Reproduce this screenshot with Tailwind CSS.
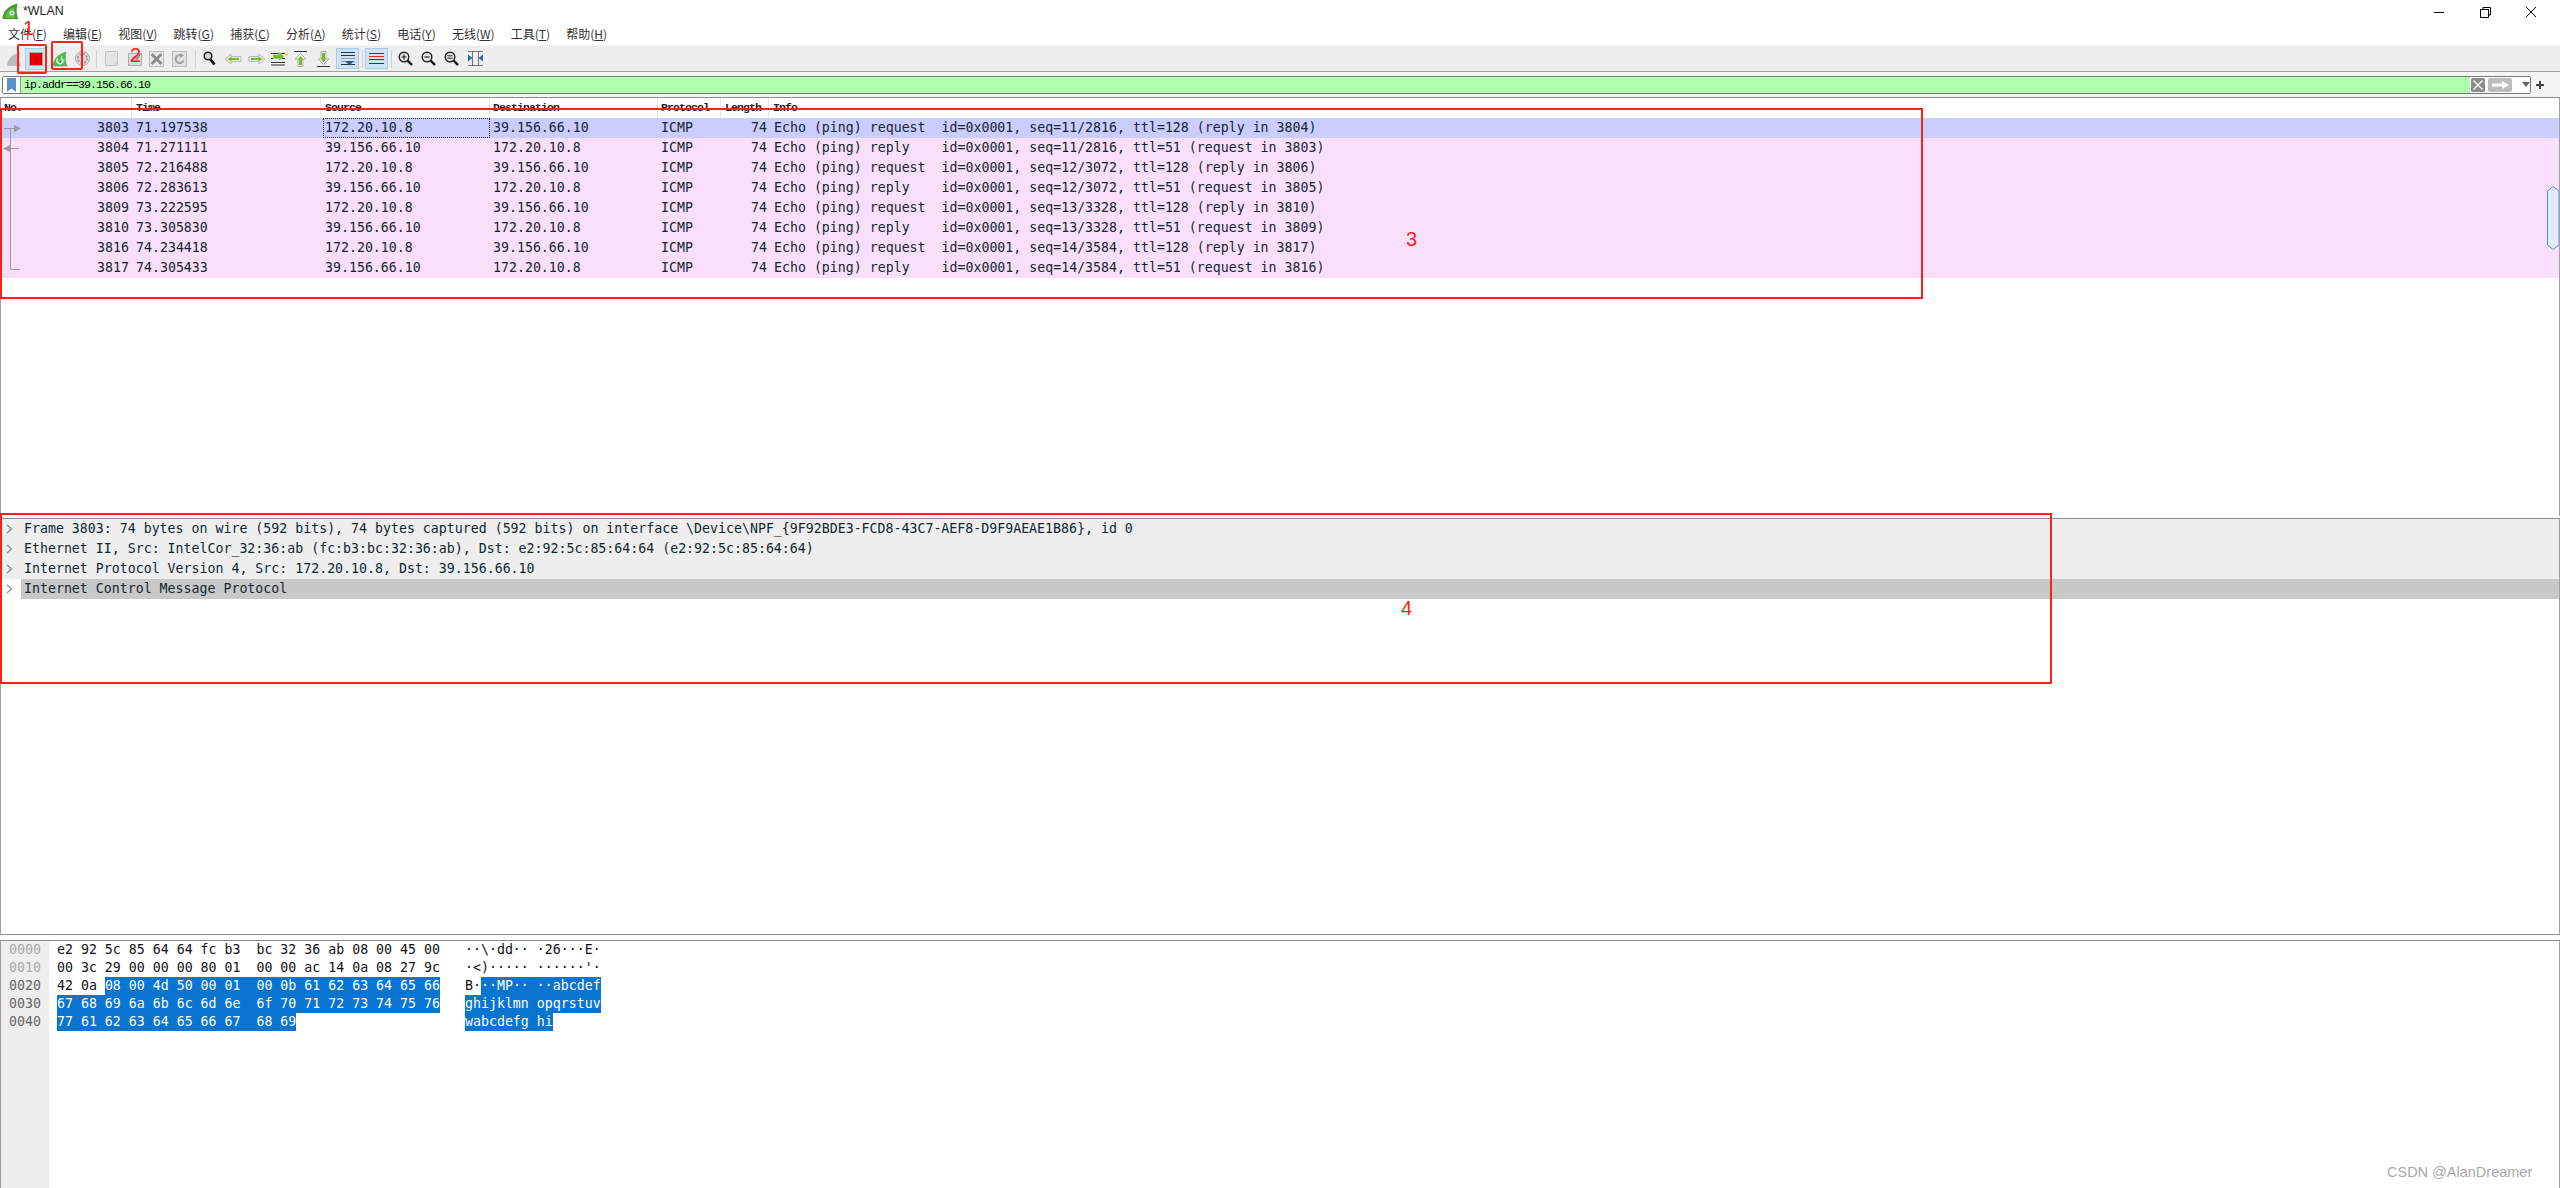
<!DOCTYPE html>
<html>
<head>
<meta charset="utf-8">
<title>*WLAN</title>
<script src="https://cdn.jsdelivr.net/npm/@tailwindcss/browser@4"></script>
</head>
<body class="bg-white">
<div class="relative w-[2560px] h-[1188px] overflow-hidden bg-white flex flex-col font-['DejaVu_Sans_Mono',monospace] text-[13.25px] text-[#12272e]">

  <!-- title bar -->
  <div class="h-[23px] flex items-center shrink-0 bg-white font-['Liberation_Sans',sans-serif]">
    <svg class="ml-[2px] w-[17px] h-[17px]" viewBox="0 0 17 17"><path d="M0.500 16C0.500 9 6 2.500 15.500 0.500C14 6 14.500 12 16.500 16Z" fill="#3f9e2b"/><path d="M3 15C4 9 8 5.500 12.500 4C11.500 8 12 12 13.500 15Z" fill="#69b84a"/><circle cx="10" cy="10" r="2.600" fill="#d8ecd0"/><circle cx="10" cy="10" r="1" fill="#69b84a"/></svg>
    <span class="ml-[4px] text-[12.4px] text-[#222]">*WLAN</span>
    <div class="ml-auto flex items-center h-full">
      <svg class="w-[46px] h-[20px]" viewBox="0 0 46 20"><path d="M18 10.5H28" stroke="#000" fill="none"/></svg>
      <svg class="w-[46px] h-[20px]" viewBox="0 0 46 20"><path d="M18.5 7.5H26.5V15.5H18.5ZM21 7.5V5.5H28.5V13H26.5" stroke="#000" fill="none"/></svg>
      <svg class="w-[46px] h-[20px] mr-[6px]" viewBox="0 0 46 20"><path d="M18 5L28 15M28 5L18 15" stroke="#000" fill="none"/></svg>
    </div>
  </div>

  <!-- menu bar -->
  <div class="h-[22px] flex items-center shrink-0 bg-white pl-[8px] gap-[16.2px] text-[12px] text-[#333] font-['Noto_Sans_CJK_SC','Noto_Sans',sans-serif] whitespace-pre">
    <span>文件(<u>F</u>)</span><span>编辑(<u>E</u>)</span><span>视图(<u>V</u>)</span><span>跳转(<u>G</u>)</span><span>捕获(<u>C</u>)</span><span>分析(<u>A</u>)</span><span>统计(<u>S</u>)</span><span>电话(<u>Y</u>)</span><span>无线(<u>W</u>)</span><span>工具(<u>T</u>)</span><span>帮助(<u>H</u>)</span>
  </div>

  <!-- main toolbar -->
  <div class="h-[27px] shrink-0 flex items-center bg-[#eeeeee] border-t border-[#f6f6f6] border-b border-b-[#a0a0a0] pl-[2px]">
    <!-- start -->
    <div class="w-[23px] h-[22px] flex items-center justify-center">
      <svg class="w-[16px] h-[16px]" viewBox="0 0 16 16"><path d="M1 15C1 9 6 3 14 1C13 6 13 11 15 15Z" fill="#bdbdbd"/></svg>
    </div>
    <!-- stop -->
    <div class="w-[21px] h-[22px] flex items-center justify-center bg-[#cfe3f5] border border-[#a5cdee]">
      <div class="w-[14px] h-[14px] bg-[#e00000] border border-[#aaa]"></div>
    </div>
    <!-- restart -->
    <div class="ml-[2px] w-[23px] h-[22px] flex items-center justify-center">
      <svg class="w-[16px] h-[16px]" viewBox="0 0 16 16"><path d="M1 15C1 9 6 3 14 1C13 6 13 11 15 15Z" fill="#3cc43c" stroke="#888" stroke-width=".6"/><path d="M6 7.5A3 3 0 1 0 11 10" fill="none" stroke="#fff" stroke-width="1.6"/><path d="M9.5 5.5V9H12.5" fill="none" stroke="#fff" stroke-width="1.2"/></svg>
    </div>
    <!-- options -->
    <div class="w-[23px] h-[22px] flex items-center justify-center">
      <svg class="w-[17px] h-[17px]" viewBox="0 0 17 17"><circle cx="8.5" cy="8.5" r="7" fill="#ddd" stroke="#aaa"/><circle cx="8.5" cy="8.5" r="4.5" fill="none" stroke="#999" stroke-width="2" stroke-dasharray="2 1.5"/><circle cx="8.5" cy="8.5" r="1.5" fill="#eee" stroke="#999" stroke-width=".6"/></svg>
    </div>
    <div class="ml-[2px] w-px h-[18px] bg-[#d0d0d0]"></div>
    <!-- open -->
    <div class="ml-[3px] w-[23px] h-[22px] flex items-center justify-center">
      <svg class="w-[15px] h-[17px]" viewBox="0 0 15 17"><path d="M1.500 1.500H13.500V15.500H1.500Z" fill="#e4e4e4" stroke="#c4c4c4"/><path d="M10 15.500L13.500 12" stroke="#c4c4c4" fill="none"/></svg>
    </div>
    <!-- save -->
    <div class="ml-px w-[21px] h-[22px] flex items-center justify-center">
      <svg class="w-[16px] h-[17px]" viewBox="0 0 16 17"><path d="M1.500 3.500H14.500V15.500H1.500Z" fill="#ddd" stroke="#aaa"/><path d="M4 11L8 7L10 9L13 4" stroke="#8d8d8d" stroke-width="2" fill="none"/></svg>
    </div>
    <!-- close -->
    <div class="w-[23px] h-[22px] flex items-center justify-center">
      <svg class="w-[15px] h-[16px]" viewBox="0 0 15 16"><rect x=".5" y=".5" width="14" height="15" fill="#e8e8e8" stroke="#bbb"/><path d="M2.500 3L12.500 13M12.500 3L2.500 13" stroke="#8e8e8e" stroke-width="3"/></svg>
    </div>
    <!-- reload -->
    <div class="w-[23px] h-[22px] flex items-center justify-center">
      <svg class="w-[15px] h-[16px]" viewBox="0 0 15 16"><rect x=".5" y=".5" width="14" height="15" fill="#e2e2e2" stroke="#bbb"/><path d="M11.500 9.500A4 4 0 1 1 9.500 4.500" stroke="#a0a0a0" stroke-width="2" fill="none"/><path d="M8 2L12 4.500L8 7Z" fill="#a0a0a0"/></svg>
    </div>
    <div class="ml-[4px] w-px h-[18px] bg-[#d0d0d0]"></div>
    <!-- find -->
    <div class="ml-[2px] w-[23px] h-[22px] flex items-center justify-center">
      <svg class="w-[13px] h-[15px]" viewBox="0 0 13 15"><circle cx="5" cy="5" r="3.800" fill="#cfd6dc" stroke="#222" stroke-width="1.600"/><path d="M7.500 8.500L11.500 13.500" stroke="#111" stroke-width="2.800"/></svg>
    </div>
    <!-- back -->
    <div class="w-[24px] h-[22px] flex items-center justify-center">
      <svg class="w-[18px] h-[12px]" viewBox="0 0 18 12"><path d="M1 6L7 1V3.500H17V8.500H7V11Z" fill="#ececd8" stroke="#b8b8b8"/><path d="M3.500 6L7.500 3.500V5H15V7H7.500V8.500Z" fill="#76bb2b"/></svg>
    </div>
    <!-- forward -->
    <div class="w-[23px] h-[22px] flex items-center justify-center">
      <svg class="w-[18px] h-[12px]" viewBox="0 0 18 12"><path d="M17 6L11 1V3.500H1V8.500H11V11Z" fill="#ececd8" stroke="#b8b8b8"/><path d="M14.500 6L10.500 3.500V5H3V7H10.500V8.500Z" fill="#76bb2b"/></svg>
    </div>
    <!-- goto -->
    <div class="w-[21px] h-[22px] flex items-center justify-center">
      <svg class="w-[18px] h-[15px]" viewBox="0 0 18 15"><path d="M1 2.500H15M1 7.500H15M1 11.500H15M1 14H15" stroke="#333"/><path d="M3 3.500H9V1L14 5.500L9 10V7.500H3Z" fill="#76bb2b" stroke="#ddd" stroke-width=".6"/><rect x="15" y="2" width="3" height="3" fill="#f2dc54"/></svg>
    </div>
    <!-- first -->
    <div class="w-[23px] h-[22px] flex items-center justify-center">
      <svg class="w-[15px] h-[16px]" viewBox="0 0 15 16"><path d="M1 .5H14" stroke="#333"/><path d="M7.500 2.500L13 8H10V15.500H5V8H2Z" fill="#f0f0e0" stroke="#b0b0b0"/><path d="M7.500 5L10.500 8.500H9V14H6V8.500H4.500Z" fill="#76bb2b"/></svg>
    </div>
    <!-- last -->
    <div class="w-[23px] h-[22px] flex items-center justify-center">
      <svg class="w-[15px] h-[16px]" viewBox="0 0 15 16"><path d="M1 15.500H14" stroke="#333"/><path d="M7.500 13.500L13 8H10V.5H5V8H2Z" fill="#f0f0e0" stroke="#b0b0b0"/><path d="M7.500 11L10.500 7.500H9V2H6V7.500H4.500Z" fill="#76bb2b"/></svg>
    </div>
    <!-- autoscroll -->
    <div class="ml-[1px] w-[23px] h-[21px] flex items-center justify-center bg-[#cfe3f5] border border-[#a5cdee]">
      <svg class="w-[16px] h-[15px]" viewBox="0 0 16 15"><path d="M1 1.500H15M1 4.500H15" stroke="#333"/><path d="M1 7.500H15M1 10.500H15" stroke="#999"/><path d="M1 13.500H15" stroke="#333"/><path d="M5 10H14L9.500 14.500Z" fill="#1d5d94"/></svg>
    </div>
    <div class="ml-[3px] w-px h-[18px] bg-[#d0d0d0]"></div>
    <!-- colorize -->
    <div class="ml-[2px] w-[23px] h-[21px] flex items-center justify-center bg-[#cfe3f5] border border-[#a5cdee]">
      <svg class="w-[15px] h-[13px]" viewBox="0 0 15 13"><path d="M0 1.500H15" stroke="#444"/><path d="M0 4.500H15" stroke="#d43030"/><path d="M0 7.500H15" stroke="#3a3a7a"/><path d="M0 11.500H15" stroke="#22367a"/></svg>
    </div>
    <div class="ml-[3px] w-px h-[18px] bg-[#d0d0d0]"></div>
    <!-- zoom in -->
    <div class="ml-[2px] w-[23px] h-[22px] flex items-center justify-center">
      <svg class="w-[15px] h-[15px]" viewBox="0 0 15 15"><circle cx="6" cy="6" r="4.800" fill="#e0e6ea" stroke="#222" stroke-width="1.400"/><path d="M9.500 9.500L14 14" stroke="#111" stroke-width="2.400"/><path d="M3.500 6H8.500M6 3.500V8.500" stroke="#222" stroke-width="1.200"/></svg>
    </div>
    <!-- zoom out -->
    <div class="w-[23px] h-[22px] flex items-center justify-center">
      <svg class="w-[15px] h-[15px]" viewBox="0 0 15 15"><circle cx="6" cy="6" r="4.800" fill="#e0e6ea" stroke="#222" stroke-width="1.400"/><path d="M9.500 9.500L14 14" stroke="#111" stroke-width="2.400"/><path d="M3.500 6H8.500" stroke="#222" stroke-width="1.200"/></svg>
    </div>
    <!-- normal -->
    <div class="w-[23px] h-[22px] flex items-center justify-center">
      <svg class="w-[15px] h-[15px]" viewBox="0 0 15 15"><circle cx="6" cy="6" r="4.800" fill="#e0e6ea" stroke="#222" stroke-width="1.400"/><path d="M9.500 9.500L14 14" stroke="#111" stroke-width="2.400"/><path d="M3.500 4.800H8.500M3.500 7.200H8.500" stroke="#222" stroke-width="1"/></svg>
    </div>
    <!-- resize columns -->
    <div class="w-[24px] h-[22px] flex items-center justify-center">
      <svg class="w-[15px] h-[15px]" viewBox="0 0 15 15"><path d="M0 .5H15M0 14.500H15M4.500 0V15M10.500 0V15" stroke="#555" stroke-width=".8"/><path d="M0 3.500L4.500 7L0 10.500ZM15 3.500L10.500 7L15 10.500Z" fill="#2f6bb0"/></svg>
    </div>
  </div>

  <!-- filter bar -->
  <div class="h-[25px] shrink-0 flex items-center bg-[#f5f5f5] pl-[2px] pr-[16px]">
    <div class="flex-1 h-[18px] flex items-stretch rounded-[2px] border border-[#777] bg-white overflow-hidden">
      <div class="w-[18px] flex items-center justify-center border-r border-[#999] bg-white">
        <svg class="w-[9px] h-[14px]" viewBox="0 0 9 14"><path d="M0 0H9V14L4.500 10.500L0 14Z" fill="#5b8fcb"/></svg>
      </div>
      <div class="flex-1 bg-[#afffaf] pl-[3px] flex items-center font-['Liberation_Mono',monospace] text-[11.500px] tracking-[-0.900px] text-black">ip.addr==39.156.66.10</div>
      <div class="w-[60px] flex items-center pl-[1px] gap-[3px]">
        <svg class="w-[14px] h-[14px]" viewBox="0 0 14 14"><rect width="14" height="14" rx="1.500" fill="#8e8e8e"/><path d="M2.500 2.500L11.500 11.500M11.500 2.500L2.500 11.500" stroke="#fff" stroke-width="1.300"/></svg>
        <svg class="w-[24px] h-[14px]" viewBox="0 0 24 14"><rect width="24" height="14" rx="2" fill="#bdbdbd"/><path d="M4 5.500H14V3L21 7L14 11V8.500H4Z" fill="#fff"/></svg>
        <svg class="ml-[7px] w-[8px] h-[5px]" viewBox="0 0 8 5"><path d="M0 0H8L4 5Z" fill="#666"/></svg>
      </div>
    </div>
    <span class="ml-[5px] w-[8px] h-[8px] relative">
      <span class="absolute left-0 top-[3px] w-[8px] h-[2px] bg-[#444]"></span>
      <span class="absolute left-[3px] top-0 w-[2px] h-[8px] bg-[#444]"></span>
    </span>
  </div>

  <!-- packet list -->
  <div class="relative h-[419px] shrink-0 bg-white border-t border-[#8c8c8c] border-x border-x-[#a0a0a0]">
    <div class="h-[20px] flex items-center font-['Liberation_Mono',monospace] font-bold text-[11.500px] tracking-[-0.900px] text-[#222] whitespace-pre">
      <div class="w-[131px] h-full pl-[3px] flex items-center border-r border-[#e6e6e6]">No.</div>
      <div class="w-[189px] h-full pl-[4px] flex items-center border-r border-[#e6e6e6]">Time</div>
      <div class="w-[169px] h-full pl-[4px] flex items-center border-r border-[#e6e6e6]">Source</div>
      <div class="w-[168px] h-full pl-[3px] flex items-center border-r border-[#e6e6e6]">Destination</div>
      <div class="w-[63px] h-full pl-[3px] flex items-center border-r border-[#e6e6e6]">Protocol</div>
      <div class="w-[48px] h-full pl-[4px] flex items-center border-r border-[#e6e6e6]">Length</div>
      <div class="flex-1 h-full pl-[4px] flex items-center">Info</div>
    </div>

    <div class="leading-[20px] [&_div]:whitespace-pre">
      <div class="h-[20px] flex bg-[#c9cdff]"><div class="w-[128px] text-right">3803</div><div class="ml-[3px] w-[189px] pl-[4px]">71.197538</div><div class="ml-[2px] w-[167px] pl-[2px] outline-1 outline-dotted outline-offset-[-1px] outline-[#223]">172.20.10.8</div><div class="w-[168px] pl-[3px]">39.156.66.10</div><div class="w-[63px] pl-[3px]">ICMP</div><div class="w-[48px] pr-[2px] text-right">74</div><div class="pl-[5px]">Echo (ping) request  id=0x0001, seq=11/2816, ttl=128 (reply in 3804)</div></div>
      <div class="h-[20px] flex bg-[#fadffd]"><div class="w-[128px] text-right">3804</div><div class="ml-[3px] w-[189px] pl-[4px]">71.271111</div><div class="w-[169px] pl-[4px]">39.156.66.10</div><div class="w-[168px] pl-[3px]">172.20.10.8</div><div class="w-[63px] pl-[3px]">ICMP</div><div class="w-[48px] pr-[2px] text-right">74</div><div class="pl-[5px]">Echo (ping) reply    id=0x0001, seq=11/2816, ttl=51 (request in 3803)</div></div>
      <div class="h-[20px] flex bg-[#fadffd]"><div class="w-[128px] text-right">3805</div><div class="ml-[3px] w-[189px] pl-[4px]">72.216488</div><div class="w-[169px] pl-[4px]">172.20.10.8</div><div class="w-[168px] pl-[3px]">39.156.66.10</div><div class="w-[63px] pl-[3px]">ICMP</div><div class="w-[48px] pr-[2px] text-right">74</div><div class="pl-[5px]">Echo (ping) request  id=0x0001, seq=12/3072, ttl=128 (reply in 3806)</div></div>
      <div class="h-[20px] flex bg-[#fadffd]"><div class="w-[128px] text-right">3806</div><div class="ml-[3px] w-[189px] pl-[4px]">72.283613</div><div class="w-[169px] pl-[4px]">39.156.66.10</div><div class="w-[168px] pl-[3px]">172.20.10.8</div><div class="w-[63px] pl-[3px]">ICMP</div><div class="w-[48px] pr-[2px] text-right">74</div><div class="pl-[5px]">Echo (ping) reply    id=0x0001, seq=12/3072, ttl=51 (request in 3805)</div></div>
      <div class="h-[20px] flex bg-[#fadffd]"><div class="w-[128px] text-right">3809</div><div class="ml-[3px] w-[189px] pl-[4px]">73.222595</div><div class="w-[169px] pl-[4px]">172.20.10.8</div><div class="w-[168px] pl-[3px]">39.156.66.10</div><div class="w-[63px] pl-[3px]">ICMP</div><div class="w-[48px] pr-[2px] text-right">74</div><div class="pl-[5px]">Echo (ping) request  id=0x0001, seq=13/3328, ttl=128 (reply in 3810)</div></div>
      <div class="h-[20px] flex bg-[#fadffd]"><div class="w-[128px] text-right">3810</div><div class="ml-[3px] w-[189px] pl-[4px]">73.305830</div><div class="w-[169px] pl-[4px]">39.156.66.10</div><div class="w-[168px] pl-[3px]">172.20.10.8</div><div class="w-[63px] pl-[3px]">ICMP</div><div class="w-[48px] pr-[2px] text-right">74</div><div class="pl-[5px]">Echo (ping) reply    id=0x0001, seq=13/3328, ttl=51 (request in 3809)</div></div>
      <div class="h-[20px] flex bg-[#fadffd]"><div class="w-[128px] text-right">3816</div><div class="ml-[3px] w-[189px] pl-[4px]">74.234418</div><div class="w-[169px] pl-[4px]">172.20.10.8</div><div class="w-[168px] pl-[3px]">39.156.66.10</div><div class="w-[63px] pl-[3px]">ICMP</div><div class="w-[48px] pr-[2px] text-right">74</div><div class="pl-[5px]">Echo (ping) request  id=0x0001, seq=14/3584, ttl=128 (reply in 3817)</div></div>
      <div class="h-[20px] flex bg-[#fadffd]"><div class="w-[128px] text-right">3817</div><div class="ml-[3px] w-[189px] pl-[4px]">74.305433</div><div class="w-[169px] pl-[4px]">39.156.66.10</div><div class="w-[168px] pl-[3px]">172.20.10.8</div><div class="w-[63px] pl-[3px]">ICMP</div><div class="w-[48px] pr-[2px] text-right">74</div><div class="pl-[5px]">Echo (ping) reply    id=0x0001, seq=14/3584, ttl=51 (request in 3816)</div></div>
    </div>

    <!-- related-packet tree lines -->
    <svg class="absolute left-0 top-[20px] w-[22px] h-[160px]" viewBox="0 0 22 160"><path d="M9.500 10.500V151.500H19M3 10.500H14M3 30.500H18" stroke="#9a9a9a" fill="none"/><path d="M13 7L20 10.500L13 14Z" fill="#9a9a9a"/><path d="M9 27L2 30.500L9 34Z" fill="#9a9a9a"/></svg>

    <!-- intelligent scrollbar thumb -->
    <svg class="absolute right-0 top-[88px] w-[12px] h-[64px]" viewBox="0 0 12 64"><path d="M.5 5L6 .5L12 5V59L6 63.500L.5 59Z" fill="#e1ebfd" stroke="#4a8cff"/></svg>
  </div>

  <!-- packet details -->
  <div class="mt-[2px] h-[417px] shrink-0 bg-white border-t border-[#8c8c8c] border-x border-x-[#a0a0a0] border-b border-b-[#8c8c8c] [&_span]:whitespace-pre [&_div_div]:whitespace-pre">
    <div class="h-[20px] flex items-center bg-[#eeeeee]"><svg class="ml-[5px] w-[7px] h-[10px]" viewBox="0 0 7 10"><path d="M1 1L5.500 5L1 9" stroke="#8c8c8c" stroke-width="1.200" fill="none"/></svg><span class="ml-[11px]">Frame 3803: 74 bytes on wire (592 bits), 74 bytes captured (592 bits) on interface \Device\NPF_{9F92BDE3-FCD8-43C7-AEF8-D9F9AEAE1B86}, id 0</span></div>
    <div class="h-[20px] flex items-center bg-[#eeeeee]"><svg class="ml-[5px] w-[7px] h-[10px]" viewBox="0 0 7 10"><path d="M1 1L5.500 5L1 9" stroke="#8c8c8c" stroke-width="1.200" fill="none"/></svg><span class="ml-[11px]">Ethernet II, Src: IntelCor_32:36:ab (fc:b3:bc:32:36:ab), Dst: e2:92:5c:85:64:64 (e2:92:5c:85:64:64)</span></div>
    <div class="h-[20px] flex items-center bg-[#eeeeee]"><svg class="ml-[5px] w-[7px] h-[10px]" viewBox="0 0 7 10"><path d="M1 1L5.500 5L1 9" stroke="#8c8c8c" stroke-width="1.200" fill="none"/></svg><span class="ml-[11px]">Internet Protocol Version 4, Src: 172.20.10.8, Dst: 39.156.66.10</span></div>
    <div class="h-[20px] flex items-center bg-white"><svg class="ml-[5px] w-[7px] h-[10px]" viewBox="0 0 7 10"><path d="M1 1L5.500 5L1 9" stroke="#8c8c8c" stroke-width="1.200" fill="none"/></svg><div class="ml-[8px] flex-1 h-full flex items-center pl-[3px] bg-[#c8c8c8]">Internet Control Message Protocol</div></div>
  </div>

  <!-- packet bytes -->
  <div class="mt-[5px] flex-1 flex bg-white border-t border-[#8c8c8c] border-x border-x-[#a0a0a0] text-[#111] [&>div>div]:whitespace-pre">
    <div class="w-[48px] bg-[#eeeeee] pl-[8px] leading-[18px]">
      <div class="h-[18px] text-[#aaaaaa]">0000</div>
      <div class="h-[18px] text-[#aaaaaa]">0010</div>
      <div class="h-[18px] text-[#666666]">0020</div>
      <div class="h-[18px] text-[#666666]">0030</div>
      <div class="h-[18px] text-[#666666]">0040</div>
    </div>
    <div class="pl-[8px] leading-[18px] w-[416px]">
      <div class="h-[18px]">e2 92 5c 85 64 64 fc b3  bc 32 36 ab 08 00 45 00</div>
      <div class="h-[18px]">00 3c 29 00 00 00 80 01  00 00 ac 14 0a 08 27 9c</div>
      <div class="h-[18px]">42 0a <span class="inline-block h-[18px] bg-[#0a74d1] text-white">08 00 4d 50 00 01  00 0b 61 62 63 64 65 66</span></div>
      <div class="h-[18px]"><span class="inline-block h-[18px] bg-[#0a74d1] text-white">67 68 69 6a 6b 6c 6d 6e  6f 70 71 72 73 74 75 76</span></div>
      <div class="h-[18px]"><span class="inline-block h-[18px] bg-[#0a74d1] text-white">77 61 62 63 64 65 66 67  68 69</span></div>
    </div>
    <div class="leading-[18px]">
      <div class="h-[18px]">··\·dd·· ·26···E·</div>
      <div class="h-[18px]">·&lt;)····· ······'·</div>
      <div class="h-[18px]">B·<span class="inline-block h-[18px] bg-[#0a74d1] text-white">··MP·· ··abcdef</span></div>
      <div class="h-[18px]"><span class="inline-block h-[18px] bg-[#0a74d1] text-white">ghijklmn opqrstuv</span></div>
      <div class="h-[18px]"><span class="inline-block h-[18px] bg-[#0a74d1] text-white">wabcdefg hi</span></div>
    </div>
  </div>

  <!-- red annotations -->
  <div class="absolute left-[17px] top-[44px] w-[30px] h-[30px] border-2 border-[#ff2016] rounded-[2px]"></div>
  <div class="absolute left-[51px] top-[41px] w-[32px] h-[29px] border-2 border-[#ff2016] rounded-[2px]"></div>
  <div class="absolute left-0 top-[108px] w-[1923px] h-[191px] border-2 border-[#ff2016]"></div>
  <div class="absolute left-0 top-[513px] w-[2052px] h-[171px] border-2 border-[#ff2016]"></div>
  <span class="absolute left-[23px] top-[16px] text-[20px] leading-[24px] text-[#ff2016] font-['Liberation_Sans',sans-serif]">1</span>
  <span class="absolute left-[130px] top-[43px] text-[20px] leading-[24px] text-[#ff2016] font-['Liberation_Sans',sans-serif]">2</span>
  <span class="absolute left-[1406px] top-[227px] text-[20px] leading-[24px] text-[#ff2016] font-['Liberation_Sans',sans-serif]">3</span>
  <span class="absolute left-[1401px] top-[596px] text-[20px] leading-[24px] text-[#ff2016] font-['Liberation_Sans',sans-serif]">4</span>

  <!-- watermark -->
  <span class="absolute left-[2387px] top-[1163px] text-[14.500px] leading-[18px] text-[#a8a8a8] font-['Liberation_Sans',sans-serif]">CSDN @AlanDreamer</span>
</div>
</body>
</html>
